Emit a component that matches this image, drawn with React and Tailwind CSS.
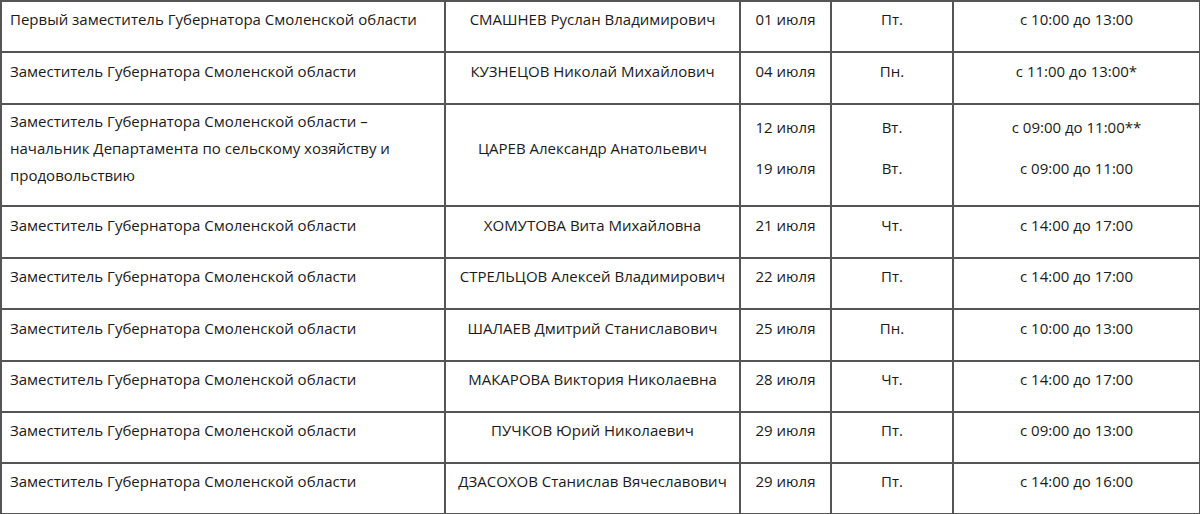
import React from "react";

const rows = [
  { pos: "Первый заместитель Губернатора Смоленской области", name: "СМАШНЕВ Руслан Владимирович", date: ["01 июля"], day: ["Пт."], time: ["с 10:00 до 13:00"], h: "h-[51px]" },
  { pos: "Заместитель Губернатора Смоленской области", name: "КУЗНЕЦОВ Николай Михайлович", date: ["04 июля"], day: ["Пн."], time: ["с 11:00 до 13:00*"], h: "h-[52px]" },
  { pos: null, name: "ЦАРЕВ Александр Анатольевич", date: ["12 июля", "19 июля"], day: ["Вт.", "Вт."], time: ["с 09:00 до 11:00**", "с 09:00 до 11:00"], h: "h-[102px]" },
  { pos: "Заместитель Губернатора Смоленской области", name: "ХОМУТОВА Вита Михайловна", date: ["21 июля"], day: ["Чт."], time: ["с 14:00 до 17:00"], h: "h-[52px]" },
  { pos: "Заместитель Губернатора Смоленской области", name: "СТРЕЛЬЦОВ Алексей Владимирович", date: ["22 июля"], day: ["Пт."], time: ["с 14:00 до 17:00"], h: "h-[51px]" },
  { pos: "Заместитель Губернатора Смоленской области", name: "ШАЛАЕВ Дмитрий Станиславович", date: ["25 июля"], day: ["Пн."], time: ["с 10:00 до 13:00"], h: "h-[52px]" },
  { pos: "Заместитель Губернатора Смоленской области", name: "МАКАРОВА Виктория Николаевна", date: ["28 июля"], day: ["Чт."], time: ["с 14:00 до 17:00"], h: "h-[51px]" },
  { pos: "Заместитель Губернатора Смоленской области", name: "ПУЧКОВ Юрий Николаевич", date: ["29 июля"], day: ["Пт."], time: ["с 09:00 до 13:00"], h: "h-[51px]" },
  { pos: "Заместитель Губернатора Смоленской области", name: "ДЗАСОХОВ Станислав Вячеславович", date: ["29 июля"], day: ["Пт."], time: ["с 14:00 до 16:00"], h: "h-[51px]" },
];

function Stack({ items }) {
  return (
    <div className="flex flex-col items-center gap-[14px]">
      {items.map((t, i) => (
        <div key={i}>{t}</div>
      ))}
    </div>
  );
}

export default function App() {
  const td = "border-2 border-[#555] align-middle p-0 pb-[14px]";
  return (
    <div className="bg-white w-[1200px] h-[514px] overflow-hidden">
      <table
        className="table-fixed border-collapse w-[1199px] text-[15px] leading-[27px] text-[#1a1a1a]"
        style={{ fontFamily: '"Open Sans", sans-serif' }}
      >
        <colgroup>
          <col className="w-[444px]" />
          <col className="w-[295px]" />
          <col className="w-[91px]" />
          <col className="w-[122px]" />
          <col className="w-[247px]" />
        </colgroup>
        <tbody>
          {rows.map((r, i) => (
            <tr key={i} className={r.h}>
              <td className={`${td} pl-[8px] text-left`}>
                {r.pos ? (
                  r.pos
                ) : (
                  <>
                    Заместитель Губернатора Смоленской области –<br />
                    начальник Департамента по сельскому хозяйству и<br />
                    продовольствию
                  </>
                )}
              </td>
              <td className={`${td} text-center`}>{r.name}</td>
              <td className={`${td} text-center`}>
                <Stack items={r.date} />
              </td>
              <td className={`${td} text-center`}>
                <Stack items={r.day} />
              </td>
              <td className={`${td} text-center`}>
                <Stack items={r.time} />
              </td>
            </tr>
          ))}
        </tbody>
      </table>
    </div>
  );
}
